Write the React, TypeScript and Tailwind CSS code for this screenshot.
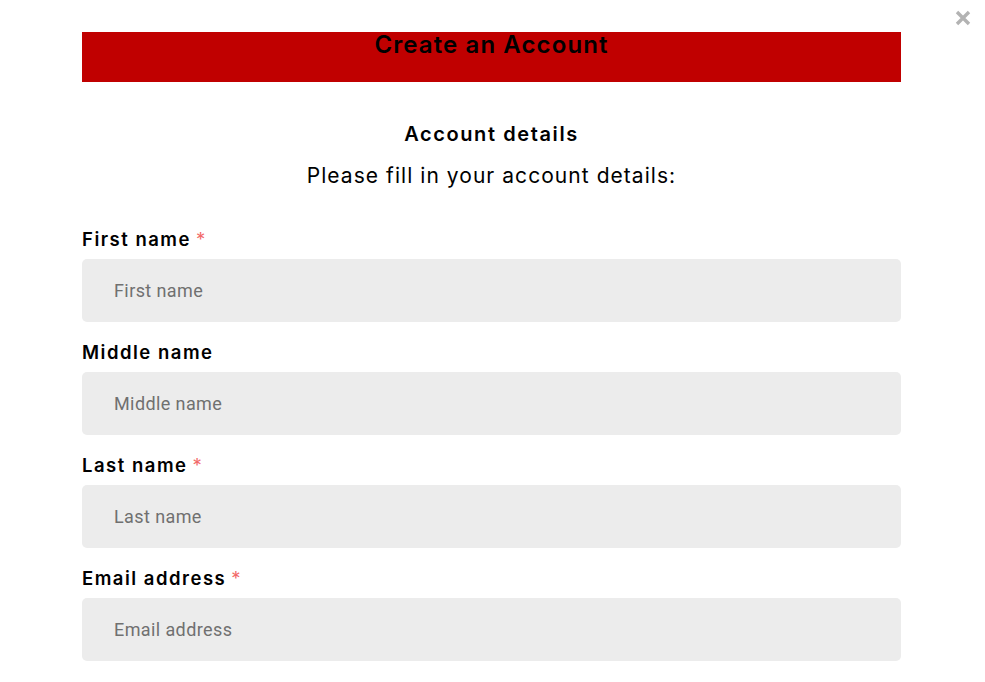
import React from "react";

const fields = [
  { label: "First name", required: true },
  { label: "Middle name", required: false },
  { label: "Last name", required: true },
  { label: "Email address", required: true },
];

export default function App() {
  return (
    <div
      className="relative w-[985px] h-[682px] overflow-hidden bg-white text-black"
      style={{ fontFamily: "Inter, 'Noto Sans', sans-serif" }}
    >
      <button className="absolute left-[955px] top-[10px] w-[16px] h-[16px]">
        <svg viewBox="0 0 16 16" width="16" height="16">
          <path d="M2 2 L14 14 M14 2 L2 14" stroke="#b3b3b3" strokeWidth="3.4" strokeLinecap="butt" />
        </svg>
      </button>
      <div className="ml-[82px] w-[819px] pt-[32px]">
        <div className="h-[50px] bg-[#c00000] flex justify-center">
          <h1 className="text-[24px] font-semibold leading-[26px] tracking-[1.1px]">Create an Account</h1>
        </div>
        <div className="mt-[38px] text-center">
          <h2 className="text-[20px] font-semibold leading-[28px] tracking-[1.6px]">Account details</h2>
          <p className="mt-[14px] text-[21px] font-normal leading-[28px] tracking-[1.05px]">Please fill in your account details:</p>
        </div>
        <div className="mt-[36px] flex flex-col gap-[17px]">
          {fields.map((f) => (
            <div key={f.label} className="flex flex-col">
              <label className="text-[18.5px] font-semibold leading-[27px] mb-[6px] tracking-[1.5px]">
                {f.label}
                {f.required && <span className="text-[#f26a6a] ml-[5px] font-normal">*</span>}
              </label>
              <input
                placeholder={f.label}
                className="h-[63px] w-full rounded-[5px] bg-[#ececec] px-[32px] text-[18px] tracking-[0.4px] outline-none placeholder:text-[#707070]"
                style={{ fontFamily: "Roboto, sans-serif" }}
              />
            </div>
          ))}
        </div>
      </div>
    </div>
  );
}
